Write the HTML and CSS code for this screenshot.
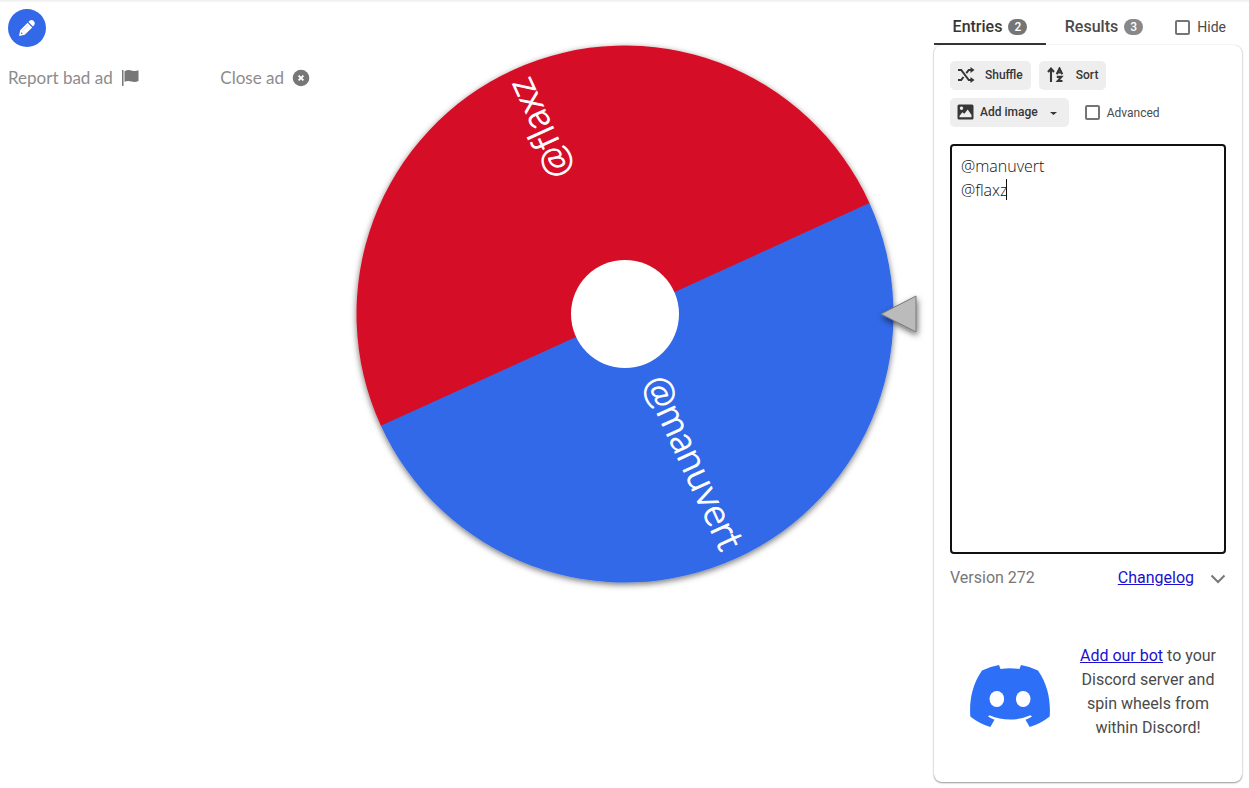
FILE: index.html
```html
<!DOCTYPE html>
<html lang="en">
<head>
<meta charset="utf-8">
<meta name="viewport" content="width=device-width, initial-scale=1">
<title>Wheel of Names</title>
<link rel="stylesheet" href="styles.css">
</head>
<body>
<div class="top-edge"></div>
<div class="page">
  <aside class="left">
    <button class="edit-btn" type="button" aria-label="Customize">
      <svg width="18" height="18" viewBox="0 0 18 18"><path fill="#fff" d="M1 17l1.200-5.800L9.600 3.800l4.600 4.600-7.400 7.400zM10.500 2.900l1.400-1.300q1.900-1.400 3.900.500 1.900 2 .5 3.900l-1.300 1.400z"/><path d="M4.500 11.800l6.200-6.200" stroke="#bccdf9" stroke-width=".8"/><circle cx="3.700" cy="14.300" r=".8" fill="#3369e8"/></svg>
    </button>
    <div class="ad-bar">
      <button class="ad-btn" type="button">Report bad ad
        <svg width="18" height="18" viewBox="0 0 18 18"><path fill="#777" d="M1 1h1.500v16H1zM3.500 2.200Q7 .300 10.500 1.500T17.500 1.300V12q-3.500 1.800-7 .600T3.500 12.800z"/></svg>
      </button>
      <button class="ad-btn" type="button">Close ad
        <svg width="18" height="18" viewBox="0 0 18 18"><circle cx="9" cy="9" r="8.300" fill="#777"/><path d="M6.600 6.600l4.800 4.800m0-4.800l-4.800 4.800" stroke="#fff" stroke-width="1.900"/></svg>
      </button>
    </div>
  </aside>

  <main class="wheel-area">
    <svg class="wheel" viewBox="0 0 618 618" role="img" aria-label="Wheel">
      <defs>
        <filter id="rim" x="-10%" y="-10%" width="120%" height="120%"><feDropShadow dx="0" dy="2" stdDeviation="3" flood-color="#000" flood-opacity=".55"/></filter>
        <filter id="tip" x="-40%" y="-40%" width="180%" height="190%"><feDropShadow dx="1" dy="3" stdDeviation="3" flood-color="#000" flood-opacity=".6"/></filter>
      </defs>
      <g transform="translate(309 309)">
        <g filter="url(#rim)">
          <path d="M-268.500 0A268.500 268.500 0 0 0 268.500 0z" fill="#3369e8" transform="rotate(-24.500)"/>
          <path d="M-268.500 .5V0A268.500 268.500 0 0 1 268.500 0V.5z" fill="#d50f25" transform="rotate(-24.500)"/>
        </g>
        <circle r="54" fill="#fff"/>
        <text class="slice-text" x="257" y="12" transform="rotate(65.500)">@manuvert</text>
        <text class="slice-text" x="257" y="12" transform="rotate(245.500)">@flaxz</text>
        <path d="M256 0l35-18v36z" fill="#bbb" stroke="#777" stroke-width="1" filter="url(#tip)"/>
      </g>
    </svg>
  </main>

  <section class="panel">
    <nav class="tabs">
      <button class="tab tab-active" type="button">Entries <span class="count">2</span></button>
      <button class="tab tab-results" type="button">Results <span class="count count-muted">3</span></button>
      <label class="check hide-check"><input type="checkbox">Hide</label>
    </nav>
    <div class="card">
      <div class="tools">
        <button class="tool" type="button">
          <svg width="18" height="16" viewBox="0 0 18 16"><g fill="none" stroke="#363636" stroke-width="2"><path d="M1 3h3.200l7.600 10H15M1 13h3.200l2.300-3M9.300 6.200L11.800 3H15"/></g><path fill="#363636" d="M13.500 0l4 3-4 3zM13.500 10l4 3-4 3z"/></svg>
          <span>Shuffle</span>
        </button>
        <button class="tool tool-sort" type="button">
          <svg width="18" height="16" viewBox="0 0 18 16"><g fill="none" stroke="#363636" stroke-width="2.100"><path d="M4 15V2M1 5l3-3.400L7 5"/><path d="M9.700 7.200L12.500 1.500l2.800 5.700M10.500 5.500h4M9.800 9.900h4.600L10.800 14H15.500"/></g></svg>
          <span>Sort</span>
        </button>
      </div>
      <div class="tools">
        <button class="tool tool-image" type="button">
          <svg width="17" height="16" viewBox="0 0 17 16"><path fill="#363636" fill-rule="evenodd" d="M2 .5h13Q16.500.5 16.500 2v12q0 1.500-1.500 1.500H2Q.5 15.500.5 14V2Q.5.5 2 .5zM4.500 2.500a1.700 1.700 0 1 0 .01 0zM2.500 13.300h12V11L10.700 5.500 7.400 9.800 5.300 8.300 2.500 12z"/></svg>
          <span>Add image</span>
          <svg class="drop" width="7" height="3" viewBox="0 0 7 3"><path fill="#363636" d="M0 0h7L3.500 3z"/></svg>
        </button>
        <label class="check advanced"><input type="checkbox">Advanced</label>
      </div>
      <div class="entries">
        <textarea class="entries-box" aria-label="Entries" spellcheck="false">@manuvert
@flaxz</textarea>
        <span class="caret"></span>
      </div>
      <div class="version">
        <span>Version 272</span>
        <a class="changelog" href="#">Changelog</a>
        <button class="chevron" type="button" aria-label="Expand"><svg width="16" height="10" viewBox="0 0 16 10"><path d="M1.500 1.500L8 8l6.500-6.500" fill="none" stroke="#777" stroke-width="2"/></svg></button>
      </div>
      <div class="promo">
        <svg class="discord" width="80" height="62" viewBox="0 0 80 62"><path fill="#2e6ff8" d="M29 0Q20 1.500 12 5.500C2 20-.800 36 .300 51.500Q9 58.500 20.300 62L24.500 54.800Q21 53.400 18 51.500L19.500 50.200Q40 59 60.500 50.200L62 51.500Q59 53.400 55.500 54.800L59.700 62Q71 58.500 79.700 51.500C80.800 36 78 20 68 5.500Q60 1.500 51 0L49.500 4Q40 2.700 30.500 4z"/><ellipse cx="26.800" cy="34" rx="7.300" ry="8" fill="#fff"/><ellipse cx="53.200" cy="34" rx="7.300" ry="8" fill="#fff"/></svg>
        <p class="promo-text"><a href="#">Add our bot</a> to your Discord server and spin wheels from within Discord!</p>
      </div>
    </div>
  </section>
</div>
</body>
</html>
```
FILE: styles.css
```css
* { box-sizing: border-box; }
body { margin: 0; background: #fff; color: #4a4a4a; font-family: Roboto, sans-serif; font-size: 16px; line-height: 24px; }
button { font: inherit; color: inherit; border: 0; background: none; padding: 0; margin: 0; cursor: pointer; }
svg { display: block; flex: none; }
a { color: #1b10d0; text-decoration: underline; }

.top-edge { position: absolute; top: 0; left: 0; right: 0; height: 3px; background: linear-gradient(#ededed, #fff); }
.page { display: grid; grid-template-columns: 308px minmax(0, 1fr) 308px; min-height: 100vh; padding: 5px 7px 6px 8px; }

.left { padding-top: 4px; }
.edit-btn { width: 38px; height: 38px; border-radius: 50%; background: #3369e8; display: flex; align-items: center; justify-content: center; }
.ad-bar { display: flex; justify-content: space-between; margin-top: 19px; padding-right: 6px; }
.ad-btn { display: flex; align-items: center; gap: 8px; font-family: Lato, sans-serif; font-size: 17px; font-weight: 400; color: #8c8c8c; }

.wheel { width: 100%; height: auto; overflow: visible; }
.slice-text { font-family: Lato, sans-serif; font-size: 38px; font-weight: 300; fill: #fff; stroke: #fff; stroke-width: 1px; text-anchor: end; font-variant-ligatures: none; }

.panel { display: flex; flex-direction: column; }
.tabs { display: flex; height: 40px; }
.tab { width: 112px; display: flex; align-items: center; justify-content: center; gap: 6px; font-weight: 500; color: #4a4a4a; border-bottom: 2px solid transparent; padding-top: 5px; }
.tab-active { color: #363636; border-bottom-color: #363636; }
.tab-results { width: 116px; }
.count { min-width: 19px; height: 16px; border-radius: 8px; background: #757575; color: #fff; font-size: 12px; line-height: 16px; text-align: center; }
.count-muted { background: #888; }
.check { display: flex; align-items: center; gap: 7px; font-size: 14px; cursor: pointer; }
.check input { appearance: none; width: 15px; height: 15px; margin: 0; border: 2px solid #757575; border-radius: 2px; background: #fff; }
.hide-check { margin-left: auto; padding: 4px 16px 0 0; }
.advanced { margin-left: 8px; font-size: 12px; }

.card { flex: 1; display: flex; flex-direction: column; padding: 16px; border-radius: 8px; box-shadow: 0 1px 2px rgba(0, 0, 0, .4), 0 0 1px rgba(0, 0, 0, .2); }
.tools { display: flex; gap: 8px; margin-bottom: 8px; }
.tool { display: flex; align-items: center; height: 29px; padding: 0 8px 1px 7px; gap: 10px; border-radius: 5px; background: #eee; color: #363636; font-size: 12px; font-weight: 500; }
.tool-sort { padding-left: 8px; gap: 11px; }
.tool-image { gap: 6px; padding-right: 12px; }
.drop { margin: 2px 0 0 6px; }

.entries { position: relative; flex: 1; display: flex; margin-top: 9px; }
.entries-box { flex: 1; width: 100%; padding: 8px 9px; border: 2px solid #111; border-radius: 4px; outline: 0; resize: none; background: #fff; color: #111; font-family: "Open Sans", "Noto Sans", sans-serif; font-size: 16px; font-weight: 300; line-height: 24px; }
.caret { position: absolute; left: 56px; top: 35px; width: 1px; height: 21px; background: #111; }

.version { display: flex; align-items: center; margin-top: 12px; color: #777; }
.changelog { margin-left: auto; }
.chevron { margin-left: 16px; padding-top: 2px; }

.promo { display: flex; align-items: center; gap: 20px; padding: 54px 0 26px 20px; }
.discord { margin-top: 8px; }
.promo-text { flex: 1; margin: 0; text-align: center; }
```
